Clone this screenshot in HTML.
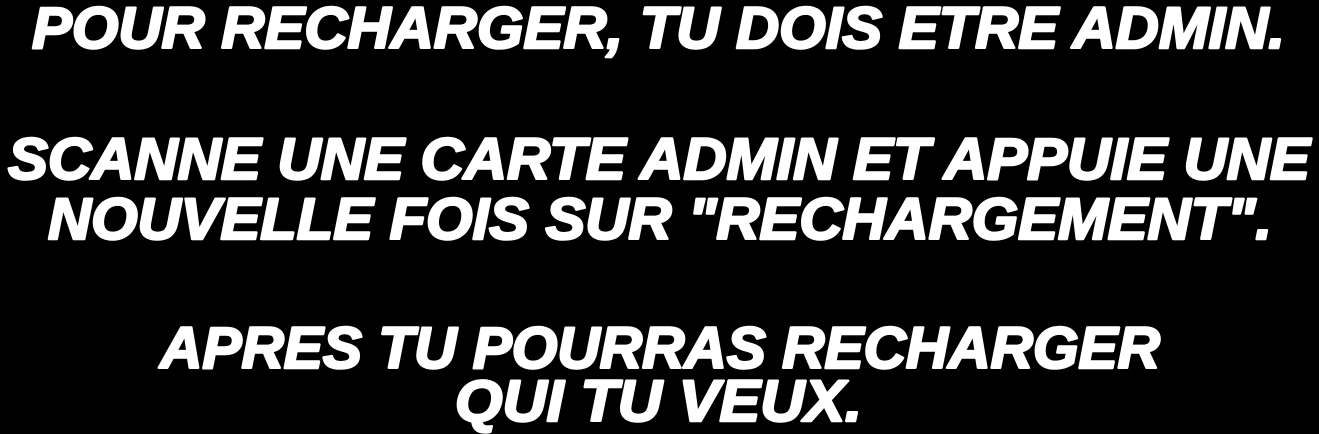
<!DOCTYPE html>
<html><head><meta charset="utf-8"><style>
html,body{margin:0;padding:0;background:#000;width:1319px;height:434px;overflow:hidden}
text{font-family:"Liberation Sans",sans-serif;font-weight:bold;font-style:italic;font-size:58px;fill:#fff;stroke:#fff;stroke-width:2.5px;stroke-linejoin:round}
</style></head><body>
<svg width="1319" height="434" xmlns="http://www.w3.org/2000/svg">
<text x="32" y="48" textLength="1253" lengthAdjust="spacingAndGlyphs">POUR RECHARGER, TU DOIS ETRE ADMIN.</text>
<text x="8" y="179" textLength="1302" lengthAdjust="spacingAndGlyphs">SCANNE UNE CARTE ADMIN ET APPUIE UNE</text>
<text x="48" y="239" textLength="1224" lengthAdjust="spacingAndGlyphs">NOUVELLE FOIS SUR  "RECHARGEMENT".</text>
<text x="160" y="368" textLength="1000" lengthAdjust="spacingAndGlyphs">APRES TU POURRAS RECHARGER</text>
<text x="455" y="421" textLength="407" lengthAdjust="spacingAndGlyphs">QUI TU VEUX.</text>
</svg>
</body></html>
